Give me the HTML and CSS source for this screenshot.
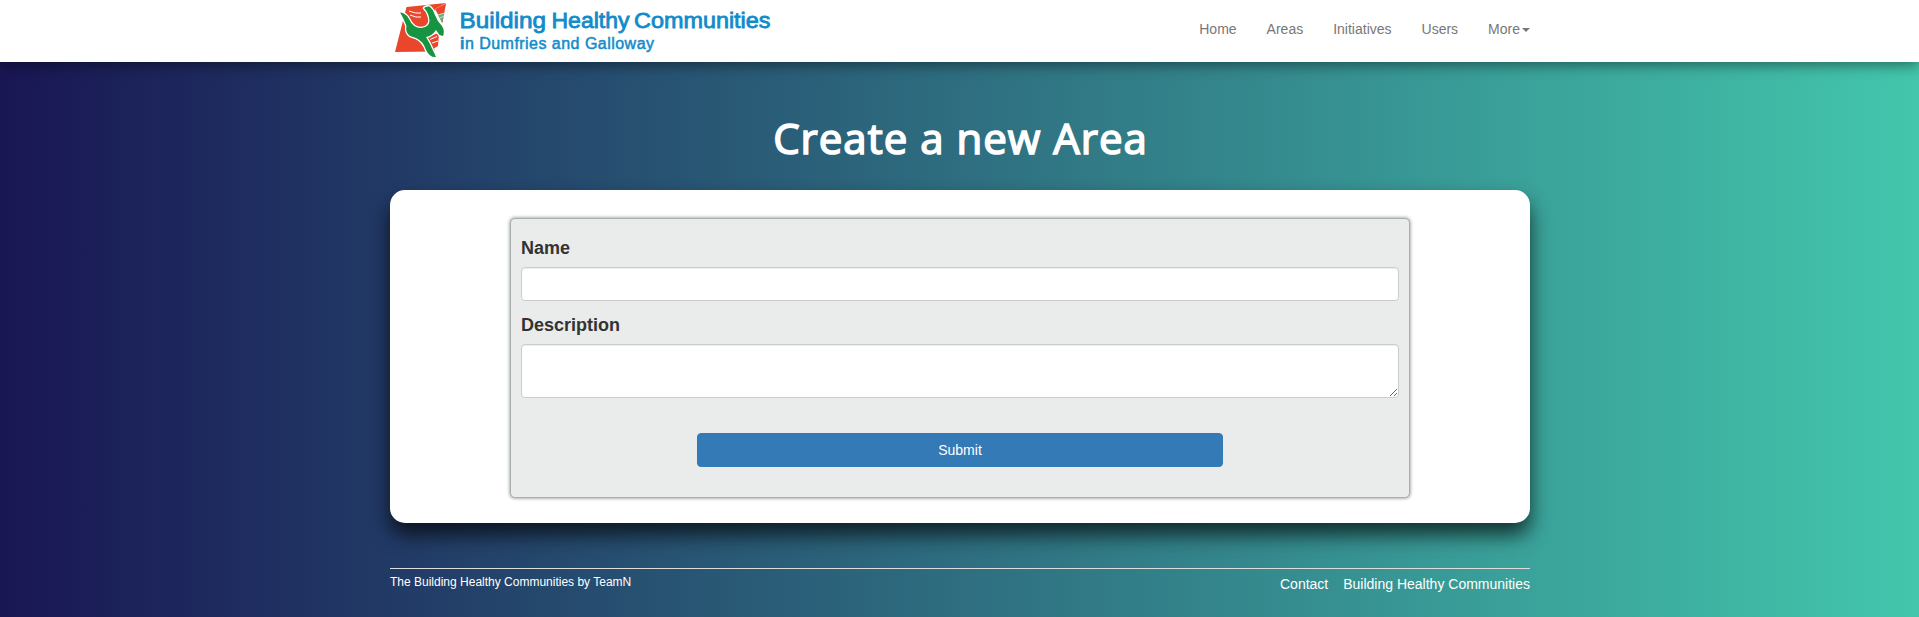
FILE: index.html
```html
<!DOCTYPE html>
<html lang="en">
<head>
<meta charset="utf-8">
<title>Create a new Area</title>
<link rel="stylesheet" href="styles.css">
</head>
<body>
<header class="navbar">
  <div class="container navbar-inner">
    <a class="brand" aria-label="Building Healthy Communities">
      <svg width="70" height="62" viewBox="0 0 70 62">
        <path d="M16.500 7 56 3 44 51.500 5 52Z" fill="#e9462b"/>
        <path d="M45 9 56 3 49 45 45 50 37 38Z" fill="#fff"/>
        <path d="M45 9 56 3.500 52.500 23Z" fill="#e9462b"/>
        <path d="M48 14.500 54.500 12.500 52 23Z" fill="#6bad78"/>
        <path d="M48 15 54.500 13M50 18 54 16" stroke="#dfeee0" stroke-width=".8"/>
        <path d="M36 37 49 33 48 46 43 49Z" fill="#e9462b"/>
        <path d="M40 39.500 47 36.500M42 43 48 41" stroke="#fff" stroke-width="1"/>
        <path d="M19 11Q26 14 31 13M20 15Q26 18 31 17" fill="none" stroke="#fff" stroke-width="1"/>
        <path d="M10 12.500Q16 13 19 19Q23 28 31 28Q39 27 39.500 21Q39 13 34 8Q36 6 39.500 6.500Q43 9 44.500 14Q47 21 52 26Q55 31 53 36L49.500 35 46 30Q42 36 36 37L40 44 46 57Q40 58 36 50Q33 41 26 38L20 36Q15 32 16.500 26Q13 17 10 12.500Z" fill="#169442" stroke="#fff" stroke-width="2.600" stroke-linejoin="round" paint-order="stroke"/>
      </svg>
      <svg width="330" height="62" viewBox="0 0 330 62">
        <text class="logo-title" x="-0.500" y="28" textLength="86.500" lengthAdjust="spacingAndGlyphs">Building</text>
        <text class="logo-title" x="91.500" y="28" textLength="78" lengthAdjust="spacingAndGlyphs">Healthy</text>
        <text class="logo-title" x="174" y="28" textLength="136.500" lengthAdjust="spacingAndGlyphs">Communities</text>
        <text class="logo-sub" x="0" y="48.500" textLength="194" lengthAdjust="spacing"><tspan class="logo-initial">i</tspan>n Dumfries and Galloway</text>
      </svg>
    </a>
    <nav class="menu">
      <a>Home</a><a>Areas</a><a>Initiatives</a><a>Users</a><a>More<span class="caret"></span></a>
    </nav>
  </div>
</header>
<main class="container">
  <h1 class="title">Create a new Area</h1>
  <section class="card">
    <form class="panel">
      <label class="label" for="name">Name</label>
      <input class="control" id="name" type="text">
      <label class="label" for="description">Description</label>
      <textarea class="control area" id="description"></textarea>
      <button class="submit" type="button">Submit</button>
    </form>
  </section>
</main>
<footer class="container footer">
  <small class="credit">The Building Healthy Communities by TeamN</small>
  <div class="links"><a>Contact</a><a>Building Healthy Communities</a></div>
</footer>
</body>
</html>
```
FILE: styles.css
```css
* { box-sizing: border-box; }
body { margin: 0; min-height: 617px; font: 14px/20px "Liberation Sans", Arial, sans-serif; color: #333; background: linear-gradient(to right, #191654, #43c6ac); overflow: hidden; }
.container { width: 1140px; margin: 0 auto 0 390px; }
.navbar { height: 62px; background: #fff; box-shadow: 0 4px 12px rgba(0,0,0,.4); }
.navbar-inner { display: flex; justify-content: space-between; }
.brand { display: flex; }
.brand svg { display: block; flex: none; }
.logo-title, .logo-sub { font-family: "Liberation Sans", Arial, sans-serif; fill: #128bcb; stroke: #128bcb; stroke-width: .8px; }
.logo-title { font-size: 22px; }
.logo-sub { font-size: 16px; stroke-width: .5px; }
.logo-initial { font-weight: bold; }
.menu { display: flex; gap: 30px; padding-top: 19px; color: #777; }
.caret { display: inline-block; margin-left: 2px; vertical-align: middle; border-top: 4px solid #777; border-left: 4px solid transparent; border-right: 4px solid transparent; }
.title { margin: 46px 0 20px; padding: 0 0 2px 1px; font: 400 42px/60px "Open Sans", sans-serif; letter-spacing: 1px; -webkit-text-stroke: 1.6px #fff; color: #fff; text-align: center; }
.card { height: 333px; padding: 28px 120px 25px; border-radius: 15px; background: #fff; box-shadow: 0 12px 20px rgba(0,0,0,.68); }
.panel { display: flex; flex-direction: column; height: 280px; padding: 16px 10px; border: 1px solid #a8b1af; border-radius: 5px; background: #eaeceb; box-shadow: 0 0 3px 1px rgba(0,0,0,.3); }
.label { font-size: 18px; line-height: 26px; font-weight: bold; margin-bottom: 6px; }
.control { width: 100%; height: 34px; margin: 0 0 11px; border: 1px solid #ccc; border-radius: 4px; background: #fff; box-shadow: inset 0 1px 1px rgba(0,0,0,.075); }
.area { height: 54px; margin: 0; resize: vertical; }
.submit { width: 526px; height: 34px; margin: 35px auto 0; border: 1px solid #337ab7; border-radius: 4px; background: #337ab7; color: #fff; font: 14px/20px "Liberation Sans", Arial, sans-serif; }
.footer { display: flex; justify-content: space-between; margin-top: 45px; border-top: 1px solid #ddd; color: #fff; }
.credit { padding-top: 3px; font-size: 12px; }
.links { display: flex; gap: 15px; padding-top: 5px; }
```
